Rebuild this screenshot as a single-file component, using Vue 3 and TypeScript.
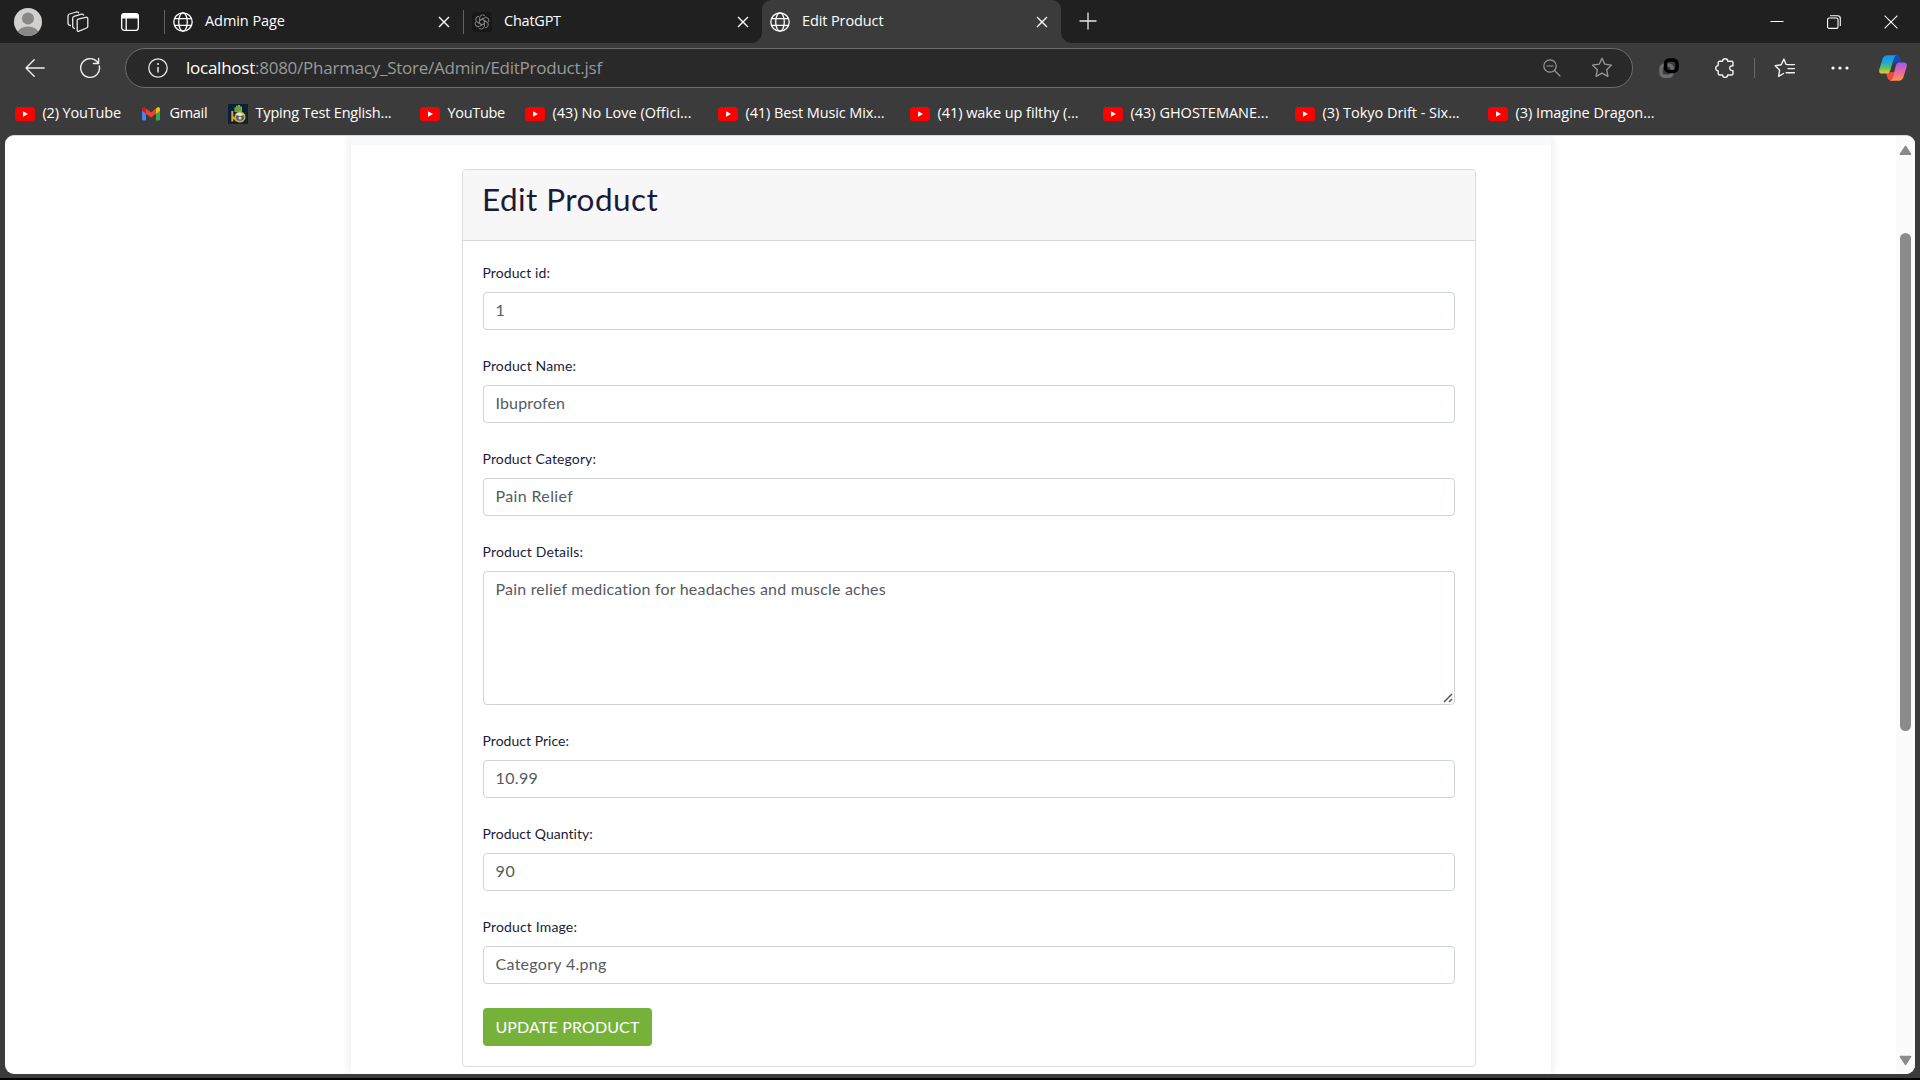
<script setup lang="ts">
import { nextTick, type Directive } from 'vue'

interface Bookmark { label: string; icon: 'yt' | 'gmail' | 'typing'; width: number }
interface Field { label: string; labelWidth: number; value: string; width: number; area?: boolean }

const bookmarks: Bookmark[] = [
  { label: '(2) YouTube', icon: 'yt', width: 78.5 },
  { label: 'Gmail', icon: 'gmail', width: 38 },
  { label: 'Typing Test English...', icon: 'typing', width: 136 },
  { label: 'YouTube', icon: 'yt', width: 57.5 },
  { label: '(43) No Love (Offici...', icon: 'yt', width: 139 },
  { label: '(41) Best Music Mix...', icon: 'yt', width: 139 },
  { label: '(41) wake up filthy (...', icon: 'yt', width: 141 },
  { label: '(43) GHOSTEMANE...', icon: 'yt', width: 138 },
  { label: '(3) Tokyo Drift - Six...', icon: 'yt', width: 137 },
  { label: '(3) Imagine Dragon...', icon: 'yt', width: 139 },
]

const fields: Field[] = [
  { label: 'Product id:', labelWidth: 67.5, value: '1', width: 9 },
  { label: 'Product Name:', labelWidth: 93.5, value: 'Ibuprofen', width: 69.5 },
  { label: 'Product Category:', labelWidth: 113.5, value: 'Pain Relief', width: 77.5 },
  { label: 'Product Details:', labelWidth: 100.5, value: 'Pain relief medication for headaches and muscle aches', width: 390.5, area: true },
  { label: 'Product Price:', labelWidth: 86.5, value: '10.99', width: 42.5 },
  { label: 'Product Quantity:', labelWidth: 110.5, value: '90', width: 19.5 },
  { label: 'Product Image:', labelWidth: 94.5, value: 'Category 4.png', width: 111 },
]

// Tracks a label out or in so that it occupies the given width.
const vFit: Directive<HTMLElement, number> = {
  mounted(el, { value }) {
    nextTick(() => {
      const count = (el.textContent ?? '').length
      if (count > 1) {
        el.style.letterSpacing = `${(value - el.getBoundingClientRect().width) / (count - 0.5)}px`
      }
    })
  },
}
</script>

<template>
  <div class="window">
    <header class="tabs">
      <svg class="avatar" width="28" height="28" viewBox="0 0 28 28">
        <clipPath id="face"><circle cx="14" cy="14" r="14" /></clipPath>
        <g clip-path="url(#face)">
          <rect width="28" height="28" fill="#d2d0ce" />
          <circle cx="14" cy="10.5" r="6" fill="#8a8886" />
          <ellipse cx="14" cy="25.5" rx="10.5" ry="7" fill="#8a8886" />
        </g>
      </svg>
      <svg class="spaces" width="22" height="22" viewBox="0 0 22 22" fill="none" stroke="#e8e8e8" stroke-width="1.3" stroke-linejoin="round" stroke-linecap="round">
        <path d="M11 8.2 18.8 6.3Q20.8 6 20.8 8V15.2Q20.8 16.5 19.6 17L12 20.2Q10.2 20.8 10.2 19V9.6Q10.2 8.5 11 8.2Z" />
        <path d="M7.5 17.3Q5.7 17.3 5.7 15.6V7.3Q5.7 5.8 7 5.4L14.5 3.2Q16.2 2.8 16.5 4.2" />
        <path d="M3.3 14.5Q1 14 1 12V5Q1 3.6 2.5 3L9.4 1Q11 .6 11.6 1.8" />
      </svg>
      <svg class="pane" width="18" height="18" viewBox="0 0 18 18" fill="none" stroke="#fff" stroke-width="1.3">
        <rect x=".7" y=".7" width="16.6" height="16.6" rx="2.6" />
        <path d="M1 2.8Q1 .8 3 .8H15Q17 .8 17 2.8V4.8H1Z" fill="#fff" />
        <path d="M5.2 5V17" />
      </svg>
      <i class="sep first"></i>
      <div class="tab">
        <svg class="globe" width="20" height="20" viewBox="0 0 20 20" fill="none" stroke="#fff" stroke-width="1.3">
          <circle cx="10" cy="10" r="9.2" /><ellipse cx="10" cy="10" rx="4.3" ry="9.2" /><path d="M1.6 6.7H18.4M1.6 13.3H18.4" />
        </svg>
        <span class="title"><span v-fit="80">Admin Page</span></span>
        <svg class="x" width="12" height="12" viewBox="0 0 12 12"><path d="M1 1 11 11M11 1 1 11" stroke="#fff" stroke-width="1.4" /></svg>
      </div>
      <i class="sep"></i>
      <div class="tab">
        <svg class="gpt" width="20" height="20" viewBox="0 0 20 20" fill="none" stroke="#808080" stroke-width="1">
          <rect width="20" height="20" rx="4" fill="#171717" stroke="none" />
          <g v-for="n in 6" :key="n" :transform="`rotate(${n * 60} 10 10)`">
            <path d="M7.6 11.2V5.9Q8 3.2 10.5 2.9Q12.5 2.9 13.5 4.5M7.6 8.5 11.9 6" />
          </g>
        </svg>
        <span class="title"><span v-fit="57">ChatGPT</span></span>
        <svg class="x" width="12" height="12" viewBox="0 0 12 12"><path d="M1 1 11 11M11 1 1 11" stroke="#fff" stroke-width="1.4" /></svg>
      </div>
      <div class="tab active">
        <svg class="globe" width="20" height="20" viewBox="0 0 20 20" fill="none" stroke="#fff" stroke-width="1.3">
          <circle cx="10" cy="10" r="9.2" /><ellipse cx="10" cy="10" rx="4.3" ry="9.2" /><path d="M1.6 6.7H18.4M1.6 13.3H18.4" />
        </svg>
        <span class="title"><span v-fit="81.5">Edit Product</span></span>
        <svg class="x" width="12" height="12" viewBox="0 0 12 12"><path d="M1 1 11 11M11 1 1 11" stroke="#fff" stroke-width="1.4" /></svg>
      </div>
      <svg class="plus" width="18" height="18" viewBox="0 0 18 18"><path d="M9 .5V17.5M.5 9H17.5" stroke="#e8e8e8" stroke-width="1.3" /></svg>
      <div class="controls">
        <svg width="14" height="14" viewBox="0 0 14 14"><path d="M.5 6.5H13.5" stroke="#fff" /></svg>
        <svg width="14" height="14" viewBox="0 0 14 14" fill="none" stroke="#fff" stroke-width="1.1"><rect x=".6" y="3" width="10.4" height="10.4" rx="1.5" /><path d="M3 .8H10.6Q13.3.8 13.3 3.5V11" /></svg>
        <svg width="14" height="14" viewBox="0 0 14 14"><path d="M.6.6 13.4 13.4M13.4.6.6 13.4" stroke="#fff" stroke-width="1.1" /></svg>
      </div>
    </header>

    <nav class="toolbar">
      <svg class="back" width="20" height="18" viewBox="0 0 20 18" fill="none" stroke="#eee" stroke-width="1.4" stroke-linecap="round" stroke-linejoin="round"><path d="M19.2 9H1M9.2.8 1 9 9.2 17.2" /></svg>
      <svg class="reload" width="22" height="22" viewBox="0 0 22 22" fill="none" stroke="#eee" stroke-width="1.4" stroke-linecap="round" stroke-linejoin="round"><path d="M20.3 9A9.4 9.4 0 1 1 18 4.6L19.3 6.2M19.6 1.5V6.5H14.4" /></svg>
      <div class="address">
        <svg class="info" width="20" height="20" viewBox="0 0 20 20" fill="none" stroke="#e8e8e8" stroke-width="1.3"><circle cx="10" cy="10" r="9.2" /><path d="M10 9V14.5" stroke-width="1.5" /><circle cx="10" cy="6.1" r="1" fill="#e8e8e8" stroke="none" /></svg>
        <span class="url"><span v-fit="416"><b>localhost</b>:8080/Pharmacy_Store/Admin/EditProduct.jsf</span></span>
        <svg class="mag" width="18" height="18" viewBox="0 0 18 18" fill="none" stroke="#999" stroke-width="1.2" stroke-linecap="round"><circle cx="7" cy="7" r="6.2" /><path d="M11.5 11.5 17 17M4 7H10" /></svg>
        <svg class="star" width="22" height="21" viewBox="0 0 22 21" fill="none" stroke="#999" stroke-width="1.3" stroke-linejoin="round"><path d="M11 1.3 13.8 7.2 20.5 8.1 15.7 12.7 16.9 19.3 11 16.2 5.1 19.3 6.3 12.7 1.5 8.1 8.2 7.2Z" /></svg>
      </div>
      <svg class="chain" width="20" height="20" viewBox="0 0 20 20" fill="none" stroke-width="3.5">
        <rect x="2" y="7" width="11.2" height="11.2" rx="3.6" stroke="#6c6c70" />
        <rect x="6.6" y="2" width="11.4" height="11.4" rx="3.6" stroke="#000" />
        <path d="M13.2 8.8V11.6" stroke="#6c6c70" stroke-width="1.6" />
      </svg>
      <svg class="puzzle" width="20" height="20" viewBox="0 0 20 20" fill="none" stroke="#f2f2f2" stroke-width="1.4" stroke-linejoin="round"><path d="M3.2 6V4.8Q3.2 3.3 4.7 3.3H7.5C7.5-.1 12.7-.1 12.7 3.3H16.5Q18 3.3 18 4.8V7.8C13.6 7 13.6 13.4 18 12.6V15.5Q18 17 16.5 17H12.7C12.7 20.2 7.5 20.2 7.5 17H4.7Q3.2 17 3.2 15.5V12.8C-.1 12.8-.1 7.6 3.2 7.6Z" /></svg>
      <i class="bar"></i>
      <svg class="favs" width="22" height="20" viewBox="0 0 22 20" fill="none" stroke="#f2f2f2" stroke-width="1.4" stroke-linejoin="round" stroke-linecap="round"><path d="M12 6.3 9.9 1.1 7.2 6.8 1.2 7.7 5.6 12 4.6 18.3 9.5 15.5M13 6.6H20.4M14 10.6H20.4M12.2 14.7H20.4" /></svg>
      <svg class="dots" width="18" height="4" viewBox="0 0 18 4" fill="#fff"><circle cx="2" cy="2" r="1.6" /><circle cx="9" cy="2" r="1.6" /><circle cx="16" cy="2" r="1.6" /></svg>
      <svg class="copilot" width="28" height="26" viewBox="0 0 28 26">
        <defs>
          <linearGradient id="cool" x1="0" y1="0" x2="0" y2="1"><stop offset="0" stop-color="#1593ed" /><stop offset=".4" stop-color="#20a8d0" /><stop offset=".7" stop-color="#65bd6a" /><stop offset="1" stop-color="#f5ca17" /></linearGradient>
          <linearGradient id="warm" x1="0" y1="0" x2="0" y2="1"><stop offset="0" stop-color="#9a5cf1" /><stop offset=".5" stop-color="#e866a4" /><stop offset="1" stop-color="#ff944b" /></linearGradient>
        </defs>
        <path d="M15 .3H18Q20.2.3 21 3L22 7.5H17Q14.5 7.5 14 10Z" fill="#1649bb" />
        <path d="M7 17.5 8.5 23Q9.2 25.7 12 25.7H14L15 17Z" fill="#f24b3d" />
        <path d="M8.5.3H18Q15.8.3 15 3.1L11 16Q10.3 18.5 7.8 18.5H3Q-.8 18.5.4 14L3.5 4Q4.6.3 8.5.3Z" fill="url(#cool)" />
        <path d="M20 7.5H25Q28.8 7.5 27.6 12L24.5 22Q23.4 25.7 19.5 25.7H11Q13 25.7 13.8 23L17 10Q17.7 7.5 20 7.5Z" fill="url(#warm)" />
      </svg>
    </nav>

    <div class="bookmarks">
      <div v-for="b in bookmarks" :key="b.label" class="bookmark">
        <svg v-if="b.icon === 'yt'" width="20" height="20" viewBox="0 0 20 20"><rect y="3" width="20" height="14" rx="3.6" fill="#f00" /><path d="M8 7.2 13 10 8 12.8Z" fill="#fff" /></svg>
        <svg v-else-if="b.icon === 'gmail'" width="20" height="20" viewBox="0 0 20 20">
          <path d="M0 6V15.2Q0 16.5 1.3 16.5H4V9Z" fill="#4285f4" /><path d="M18 6V15.2Q18 16.5 16.7 16.5H14V9Z" fill="#34a853" />
          <path d="M14 4.6V9.7L18 6.7V5Q17.8 3 16 3.1Z" fill="#fbbc04" /><path d="M4 4.6 9 8.4 14 4.6V9.7L9 13.5 4 9.7Z" fill="#ea4335" /><path d="M0 5V6.7L4 9.7V4.6L2.2 3.3Q.2 2.8 0 5Z" fill="#c5221f" />
        </svg>
        <svg v-else width="20" height="20" viewBox="0 0 20 20"><rect width="20" height="20" fill="#062234" /><path d="M6.5 8V3.2H8V1.8H10V1H12V2.5H14V8Z" fill="#7db343" /><path d="M8 3V8M10 2V8M12 3V8" stroke="#43752e" stroke-width=".6" /><path d="M4.3 7V17.5M5 13 9 17" stroke="#e5a12a" stroke-width="2" /><circle cx="12" cy="13" r="4.7" fill="#42606a" stroke="#dda329" stroke-width="1.7" /><path d="M7.5 11Q11 6 16 11L12 12Z" fill="#dce8e8" /><circle cx="12" cy="14" r="1.6" fill="#d8dedb" /></svg>
        <span v-fit="b.width">{{ b.label }}</span>
      </div>
    </div>

    <main class="viewport">
      <div class="sheet">
        <div class="strip"></div>
        <section class="card">
          <div class="card-head"><h2><span v-fit="176">Edit Product</span></h2></div>
          <form class="card-body">
            <div v-for="f in fields" :key="f.label" class="group">
              <label><span v-fit="f.labelWidth">{{ f.label }}</span></label>
              <div class="control" :class="{ area: f.area }">
                <span v-fit="f.width">{{ f.value }}</span>
                <svg v-if="f.area" class="grip" width="10" height="10" viewBox="0 0 10 10"><path d="M1 9 9 1M6 9 9 6" stroke="#555" stroke-width="1.5" /></svg>
              </div>
            </div>
            <button type="button"><span v-fit="144">UPDATE PRODUCT</span></button>
          </form>
        </section>
      </div>
      <div class="scroll">
        <svg width="13" height="11" viewBox="0 0 13 11"><path d="M6.5 1.5 11.6 9.2H1.4Z" fill="#8b8b8b" stroke="#8b8b8b" stroke-width="1.6" stroke-linejoin="round" /></svg>
        <div class="thumb"></div>
        <svg class="down" width="13" height="11" viewBox="0 0 13 11"><path d="M6.5 9.2 11.6 1.5H1.4Z" fill="#8b8b8b" stroke="#8b8b8b" stroke-width="1.6" stroke-linejoin="round" /></svg>
      </div>
    </main>
    <footer></footer>
  </div>
</template>

<style>
body { margin: 0; overflow: hidden; }
</style>

<style scoped>
* { box-sizing: border-box; }
svg { display: block; flex: none; }
span { white-space: pre; }
.window { width: 1920px; height: 1080px; display: flex; flex-direction: column; background: #3b3b3b; color: #fff; font-family: "Open Sans", "Noto Sans", sans-serif; font-size: 14.5px; }
.tabs { height: 43px; flex: none; display: flex; align-items: center; background: #202020; }
.avatar { margin-left: 14px; }
.spaces { margin-left: 25px; }
.pane { margin-left: 32px; }
.sep { width: 1px; height: 24px; background: #626262; flex: none; }
.first { margin-left: 25px; }
.tab { width: 298px; height: 43px; flex: none; display: flex; align-items: center; padding-left: 8px; }
.tab .title { width: 233px; margin-left: 12px; line-height: 20px; padding-bottom: 2px; }
.tab .title span, .url span { display: inline-block; }
.active { position: relative; width: 299px; background: #3b3b3b; border-radius: 9px 9px 0 0; }
.active .title { width: 234px; }
.active::before, .active::after { content: ""; position: absolute; bottom: 0; width: 10px; height: 10px; }
.active::before { left: -10px; background: radial-gradient(circle at 0 0, #202020 9.5px, #3b3b3b 10px); }
.active::after { right: -10px; background: radial-gradient(circle at 100% 0, #202020 9.5px, #3b3b3b 10px); }
.plus { margin-left: 18px; margin-bottom: 1px; }
.controls { margin-left: auto; margin-right: 22px; display: flex; gap: 43px; }
.toolbar { height: 49px; flex: none; display: flex; align-items: center; }
.back { margin-left: 25px; }
.reload { margin-left: 34px; }
.address { width: 1508px; height: 40px; margin-left: 24px; border: 1px solid #6c6c6c; border-radius: 20px; background: #292929; display: flex; align-items: center; }
.info { margin-left: 22px; }
.url { margin-left: 18px; font-size: 17px; line-height: 24px; color: #999; padding-top: 1px; }
.url b { font-weight: 400; color: #fff; }
.mag { margin-left: auto; }
.star { margin-left: 30px; margin-right: 19px; }
.chain { margin-left: 26px; }
.puzzle { margin-left: 36px; }
.bar { width: 1px; height: 20px; margin-left: 19px; background: #6a6a6a; }
.favs { margin-left: 19px; }
.dots { margin-left: 35px; }
.copilot { margin-left: 30px; }
.bookmarks { height: 43px; flex: none; padding-left: 15px; display: grid; grid-template-columns: 127px 86px 192px 105px 193px 192px 193px 192px 193px 180px; align-items: center; }
.bookmark { display: flex; align-items: center; gap: 7.5px; line-height: 20px; }
.bookmark span { padding-bottom: 2px; }
.viewport { height: 939px; flex: none; margin: 0 5px; border-radius: 9px; background: #fff; display: flex; overflow: hidden; border-top: 1px solid #ddd; }
.sheet { width: 1200px; margin-left: 346px; box-shadow: 0 0 10px rgba(0, 0, 0, .1); color: #1b1b38; font-family: Lato, "Open Sans", sans-serif; }
.strip { height: 9px; background: #f8f9fb; }
.card { width: 1014px; height: 898px; margin: 24px 0 0 111px; border: 1px solid #dcdcde; border-radius: 4px; overflow: hidden; }
.card-head { height: 71px; padding: 10px 20px; background: #f7f7f7; border-bottom: 1px solid #d8d8da; }
h2 { margin: 0 0 0 -1px; font-size: 31.5px; font-weight: 400; line-height: 38px; }
h2 span { display: inline-block; }
.card-body { padding: 20px; }
.group { margin-bottom: 24px; }
label { display: block; height: 31px; font-size: 14px; line-height: 23px; margin-left: -.5px; }
label span { display: inline-block; }
.control { position: relative; height: 38px; padding: 5px 11.5px; border: 1px solid #ced4da; border-radius: 4px; color: #555b61; font-size: 16px; line-height: 24px; }
.control span { display: inline-block; }
.area { height: 134px; }
.grip { position: absolute; right: 1px; bottom: 1px; }
button { display: block; height: 38px; padding: 0 0 1px; width: 169px; border: 0; border-radius: 4px; background: #76b23a; color: #fff; font: 16px/24px Lato, "Open Sans", sans-serif; }
button span { display: inline-block; }
.scroll { width: 19px; margin-left: auto; background: #fbfbfb; display: flex; flex-direction: column; align-items: center; padding: 9px 0 8px; }
.thumb { width: 11px; height: 498px; margin-top: 77px; border-radius: 6px; background: #8b8b8b; }
.down { margin-top: auto; }
footer { height: 2px; margin-top: 4px; background: #000; }
</style>
